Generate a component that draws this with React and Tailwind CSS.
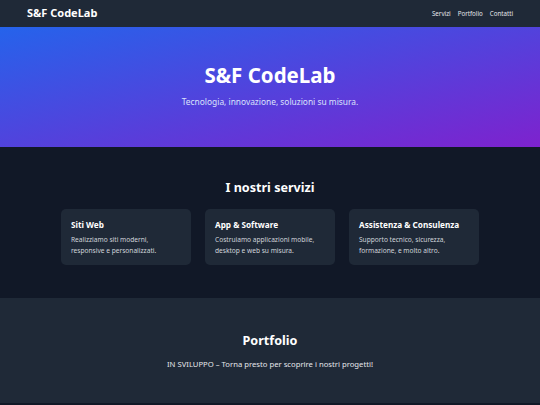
const services = [
  { title: 'Siti Web', text: 'Realizziamo siti moderni, responsive e personalizzati.' },
  { title: 'App & Software', text: 'Costruiamo applicazioni mobile, desktop e web su misura.' },
  { title: 'Assistenza & Consulenza', text: 'Supporto tecnico, sicurezza, formazione, e molto altro.' },
];

function App() {
  return (
    <div className="min-h-screen bg-[#111827] text-white font-['Noto_Sans',sans-serif]">
      {/* Navbar */}
      <nav className="h-[27px] bg-[#1f2937] flex items-center justify-between px-[27px] shadow-md">
        <span className="text-[11px] font-bold">S&amp;F CodeLab</span>
        <div className="flex gap-[7px] text-[6.2px] text-[#e5e7eb]">
          <a href="#servizi">Servizi</a>
          <a href="#portfolio">Portfolio</a>
          <a href="#contatti">Contatti</a>
        </div>
      </nav>

      {/* Hero */}
      <header className="h-[120px] bg-[linear-gradient(to_bottom_right,#2563eb,#7e22ce)] flex flex-col items-center justify-center">
        <h1 className="text-[20.5px] font-bold leading-none">S&amp;F CodeLab</h1>
        <p className="text-[8.4px] text-[#dbe2fb] mt-[10px]">Tecnologia, innovazione, soluzioni su misura.</p>
      </header>

      {/* Servizi */}
      <section id="servizi" className="h-[151px] bg-[#111827] flex flex-col items-center pt-[35px]">
        <h2 className="text-[12.6px] font-bold leading-none">I nostri servizi</h2>
        <div className="grid grid-cols-3 gap-[14px] w-[418px] mt-[14px]">
          {services.map((s) => (
            <div key={s.title} className="bg-[#1f2937] rounded-[5px] h-[56px] px-[10px] pt-[12px]">
              <h3 className="text-[8.2px] font-bold leading-none">{s.title}</h3>
              <p className="text-[6.6px] leading-[11px] text-[#d1d5db] mt-[5px]">{s.text}</p>
            </div>
          ))}
        </div>
      </section>

      {/* Portfolio */}
      <section id="portfolio" className="h-[105px] bg-[#1f2937] flex flex-col items-center pt-[37px]">
        <h2 className="text-[12.6px] font-bold leading-none">Portfolio</h2>
        <p className="text-[7.7px] text-[#e5e7eb] mt-[11px]">IN SVILUPPO – Torna presto per scoprire i nostri progetti!</p>
      </section>

      <footer id="contatti" className="h-[40px] bg-[#111827]" />
    </div>
  );
}

export default App;
